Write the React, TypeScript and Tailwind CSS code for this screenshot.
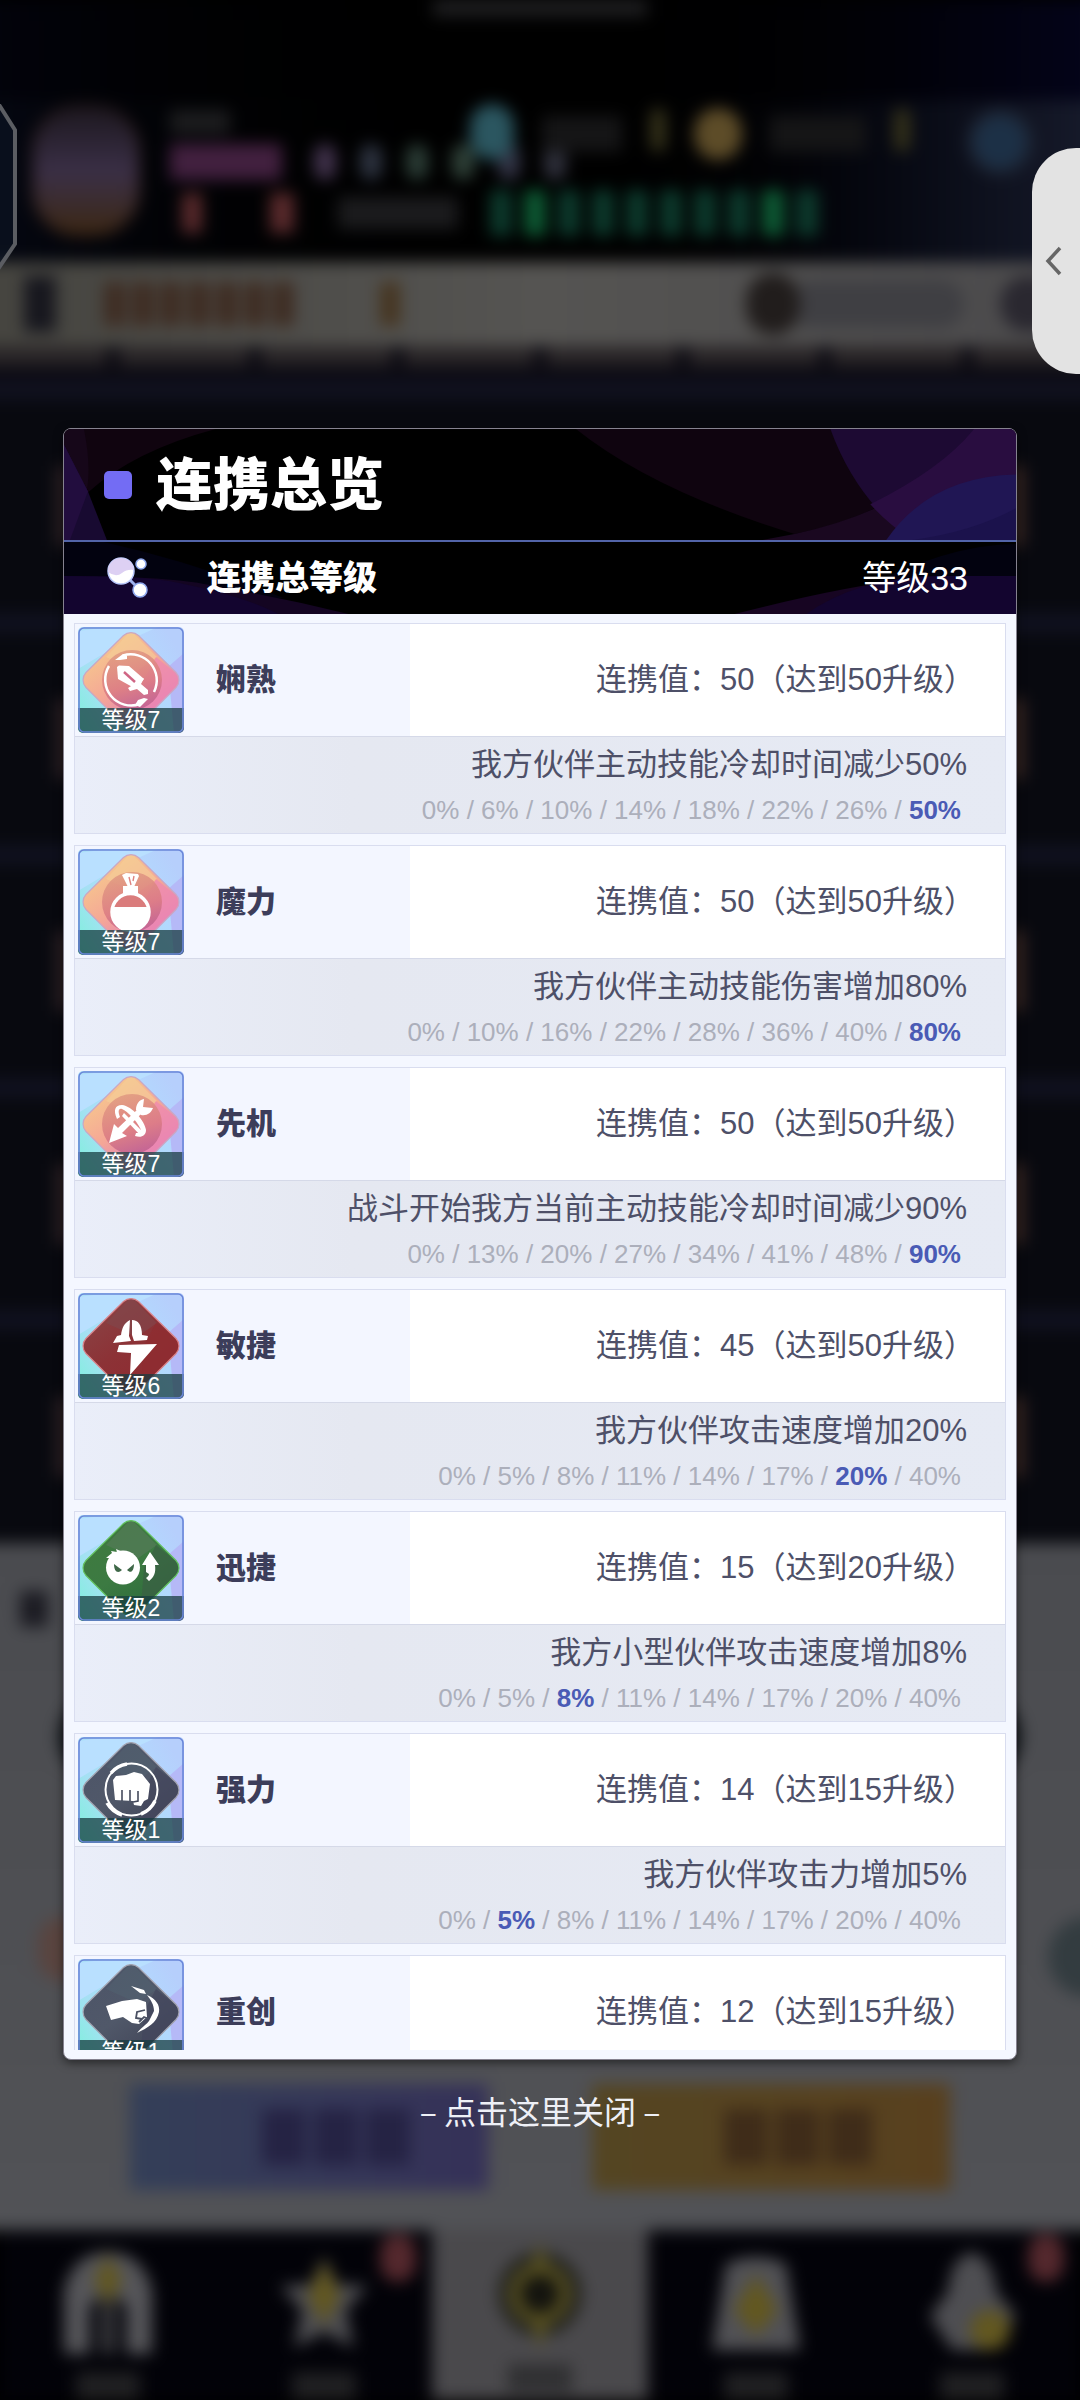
import React from "react";

type Glyph = "sword" | "flask" | "bow" | "bolt" | "slime" | "fist" | "punch";
type Tone = "rainbow" | "red" | "green" | "slate";

interface Bond {
  name: string;
  level: number;
  glyph: Glyph;
  tone: Tone;
  value: number;
  next: number;
  effect?: string;
  steps?: string[];
  active?: number;
}

const COMMON = ["0%", "5%", "8%", "11%", "14%", "17%", "20%", "40%"];

const BONDS: Bond[] = [
  { name: "娴熟", level: 7, glyph: "sword", tone: "rainbow", value: 50, next: 50, effect: "我方伙伴主动技能冷却时间减少50%", steps: ["0%", "6%", "10%", "14%", "18%", "22%", "26%", "50%"], active: 7 },
  { name: "魔力", level: 7, glyph: "flask", tone: "rainbow", value: 50, next: 50, effect: "我方伙伴主动技能伤害增加80%", steps: ["0%", "10%", "16%", "22%", "28%", "36%", "40%", "80%"], active: 7 },
  { name: "先机", level: 7, glyph: "bow", tone: "rainbow", value: 50, next: 50, effect: "战斗开始我方当前主动技能冷却时间减少90%", steps: ["0%", "13%", "20%", "27%", "34%", "41%", "48%", "90%"], active: 7 },
  { name: "敏捷", level: 6, glyph: "bolt", tone: "red", value: 45, next: 50, effect: "我方伙伴攻击速度增加20%", steps: COMMON, active: 6 },
  { name: "迅捷", level: 2, glyph: "slime", tone: "green", value: 15, next: 20, effect: "我方小型伙伴攻击速度增加8%", steps: COMMON, active: 2 },
  { name: "强力", level: 1, glyph: "fist", tone: "slate", value: 14, next: 15, effect: "我方伙伴攻击力增加5%", steps: COMMON, active: 1 },
  { name: "重创", level: 1, glyph: "punch", tone: "slate", value: 12, next: 15 },
];

const TONES: Record<Tone, { from: string; mid: string; to: string; edge: string; facetA: string; facetB: string }> = {
  rainbow: { from: "#f6cd8c", mid: "#f5a796", to: "#d874c6", edge: "#c9a7c4", facetA: "#f5cf98", facetB: "#ee88b0" },
  red: { from: "#8a4345", mid: "#8c3236", to: "#8f2a30", edge: "#d9838a", facetA: "#80474c", facetB: "#8f2c31" },
  green: { from: "#3f7a3f", mid: "#3c7a42", to: "#2c6a3a", edge: "#63c25f", facetA: "#587a5c", facetB: "#3a5f45" },
  slate: { from: "#4d5568", mid: "#505869", to: "#414457", edge: "#a3a3b0", facetA: "#52606f", facetB: "#43465c" },
};

function GlyphArt({ glyph }: { glyph: Glyph }) {
  switch (glyph) {
    case "sword":
      return (
        <g>
          <path d="M45 28.5A26 26 0 0 1 76 65" fill="none" stroke="#fff" strokeWidth="2.500" />
          <path d="M62 77A26 26 0 0 1 31 39" fill="none" stroke="#fff" strokeWidth="2.500" />
          <path d="M37 33 45 27 49 29 49 32 42 33ZM70 72 62 80 57 78 60 73 66 71Z" fill="#fff" />
          <path d="M39 40 41 38.5 51 39 66 52 58 62 40 52Z" fill="#fff" />
          <path d="m46 45 11 10" stroke="#cf6584" strokeWidth="2.400" />
          <path d="m66 51-3 6 7 6v4l-4 1-7-6-7 2-2-3Z" fill="#fff" />
        </g>
      );
    case "flask":
      return (
        <g>
          <path d="m44 26 4-2 12 1 1 2-5 11h-6Z" fill="#fff" />
          <path d="m51 28 2 8M56 27l-1 5" stroke="#de8480" strokeWidth="1.400" />
          <path d="M45 37h15v11H45Z" fill="#fff" />
          <circle cx="52.500" cy="63" r="18.500" fill="#da7c7c" stroke="#fff" strokeWidth="3.500" />
          <path d="M34 58h37a19 19 0 1 1-37 0Z" fill="#fff" />
        </g>
      );
    case "bow":
      return (
        <g fill="#fff">
          <path d="m31 72 5-19 4 4L60 38l4 4-20 20 5 3Z" />
          <path d="M58 39c0-6 3-10 8-11l-1 8 10 1c-2 5-6 8-12 7Z" />
          <path d="M39 48c-4-9-2-14 5-14 10 1 23 16 24 25 0 6-5 8-11 6l1-3c4 0 6-2 4-5C58 49 50 41 44 38c-4-1-4 3-2 8Z" />
          <path d="m46 42 20 20-4 2-18-19Z" />
        </g>
      );
    case "bolt":
      return (
        <g fill="#fff">
          <path d="m35 50 4-7 4-1c1-7 3-12 9-15l-1 16 2 5Z" />
          <path d="M54 27c6 0 10 5 10 15l6 1-1 4-13 1-2-6Z" />
          <path d="m39 59 2-7 38-1-27 31 1-22Z" />
        </g>
      );
    case "slime":
      return (
        <g>
          <path d="m28 43 6-5-1-2 6 1-1-3 9 4 12 5Z" fill="#fff" />
          <circle cx="45" cy="52.500" r="17" fill="#fff" />
          <path d="m36 49 8 6c-4 4-8 2-8-6ZM56 49l-7 6c4 4 7 1 7-6Z" fill="#3f6848" />
          <path d="m72 37 9 13h-4c1 8-1 12-6 16l-3-3c2-1 3-3 3-4l-3-2V50h-4Z" fill="#fff" />
        </g>
      );
    case "fist":
      return (
        <g>
          <circle cx="53.500" cy="52.500" r="26" fill="none" stroke="#fff" strokeWidth="2" />
          <path d="M33 36A26 26 0 0 1 49 27M29 66a26 26 0 0 0 15 12M77 64a26 26 0 0 1-14 13" fill="none" stroke="#fff" strokeWidth="3.500" />
          <path d="m35 43 3-4 10-1 8-3 8 2 8 10-2 15-4 2-3 5-7-1-1-4-18-1Z" fill="#fff" />
          <path d="M44 53v11M52 53v11M60 54v10l-5 1" stroke="#444a5c" strokeWidth="1.600" fill="none" />
        </g>
      );
    default:
      return (
        <g>
          <path d="m28 47 16-5 15-2 9 3 1 15-8 7-7-1-9-6-12 3Z" fill="#fff" />
          <path d="m67 51-8 2-1 6 6 1M61 63l5-5 5 2" stroke="#4a5062" strokeWidth="1.800" fill="none" />
          <path d="m53 27 13 4 2 4-6-1Z" fill="#fff" />
          <path d="M69 36c9 4 13 10 12 17-2 11-12 16-22 21 6-7 10-9 12-12l5-10c0-6-3-11-7-16Z" fill="#fff" />
        </g>
      );
  }
}

function BondIcon({ bond }: { bond: Bond }) {
  const t = TONES[bond.tone];
  const id = bond.glyph;
  return (
    <div className="relative flex size-[106px] shrink-0 flex-col justify-end overflow-hidden rounded-[5px]">
      <svg viewBox="0 0 106 106" className="absolute inset-0 size-full" aria-hidden="true">
        <defs>
          <linearGradient id={`${id}-tile`} x1="0" y1="0.9" x2="1" y2="0.3">
            <stop offset="0" stopColor="#7ff0dc" />
            <stop offset="0.3" stopColor="#a6e0f4" />
            <stop offset="0.7" stopColor="#b2d9fe" />
            <stop offset="1" stopColor="#b6cffc" />
          </linearGradient>
          <linearGradient id={`${id}-gem`} x1="0.2" y1="0.1" x2="0.75" y2="0.9">
            <stop offset="0" stopColor={t.from} />
            <stop offset="0.5" stopColor={t.mid} />
            <stop offset="1" stopColor={t.to} />
          </linearGradient>
          <linearGradient id={`${id}-disc`} x1="0.3" y1="0" x2="0.6" y2="1">
            <stop offset="0" stopColor="#e09a80" />
            <stop offset="0.6" stopColor="#da7a82" />
            <stop offset="1" stopColor="#bd5f90" />
          </linearGradient>
          <clipPath id={`${id}-clip`}>
            <path d="M45.500 8.500a11 11 0 0 1 15 0L98 45.500a11 11 0 0 1 0 15L60.500 98a11 11 0 0 1-15 0L8 60.500a11 11 0 0 1 0-15Z" />
          </clipPath>
        </defs>
        <rect width="106" height="106" fill={`url(#${id}-tile)`} />
        <path d="M106 26 90 40l6 66h10Z" fill="#b5b9f7" />
        <path d="M0 4 32 0h48L40 18 0 42Z" fill="#b9e0ff" />
        <g clipPath={`url(#${id}-clip)`}>
          <rect width="106" height="106" fill={`url(#${id}-gem)`} />
          <path d="M28 30 53 4l26 26-20 14Z" fill={t.facetA} opacity="0.6" />
          <path d="m78 30 28 23-44 50 4-50Z" fill={t.facetB} opacity="0.7" />
        </g>
        <path d="M45.500 8.500a11 11 0 0 1 15 0L98 45.500a11 11 0 0 1 0 15L60.500 98a11 11 0 0 1-15 0L8 60.500a11 11 0 0 1 0-15Z" fill="none" stroke={t.edge} strokeWidth="1.200" />
        {bond.tone === "rainbow" && <circle cx="54" cy="53" r="30" fill={`url(#${id}-disc)`} opacity="0.85" />}
        <GlyphArt glyph={bond.glyph} />
        <rect y="81" width="106" height="25" fill="#173c40" opacity="0.74" />
        <rect x="1" y="1" width="104" height="104" rx="5" fill="none" stroke="#6a86d8" strokeWidth="1.600" />
      </svg>
      <span className="relative text-center text-[23px] leading-[26px] text-white">等级{bond.level}</span>
    </div>
  );
}

function BondCard({ bond }: { bond: Bond }) {
  return (
    <li className="shrink-0 border border-[#d9ddef]">
      <div className="flex h-[112px] bg-white">
        <div className="flex w-[36%] items-center gap-8 bg-[#f3f6ff] pl-[3px]">
          <BondIcon bond={bond} />
          <h3 className="text-[30px] leading-9 font-black text-[#3c3d5a]">{bond.name}</h3>
        </div>
        <p className="flex flex-1 items-center justify-end pr-[30px] text-[31px] whitespace-nowrap text-[#4e5068]">
          连携值：{bond.value}（达到{bond.next}升级）
        </p>
      </div>
      {bond.effect && (
        <div className="flex h-[97px] flex-col items-end border-t border-[#d5d9e8] bg-linear-to-r from-[#eaeef9] via-[#e5e8f1] via-30% to-[#e6eaf4] pt-1.5 pr-[38px] whitespace-nowrap">
          <p className="text-[31px] leading-[44px] text-[#4e5068]">{bond.effect}</p>
          <p className="pr-1.5 text-[26px] leading-[46px] text-[#acafbb]">
            {bond.steps?.map((s, i) => (
              <React.Fragment key={i}>
                {i > 0 && " / "}
                {i === bond.active ? <strong className="font-bold text-[#4a5bb5]">{s}</strong> : s}
              </React.Fragment>
            ))}
          </p>
        </div>
      )}
    </li>
  );
}

function NavShape({ kind }: { kind: number }) {
  return (
    <svg viewBox="0 0 100 110" className="h-[110px] w-[100px]" aria-hidden="true">
      {kind === 0 && <><path d="M6 104V40Q16 2 50 2t44 38v64H68V56L50 40 32 56v48Z" fill="#555559" /><path d="M44 44h12v60H44Z" fill="#444448" /><path d="m50 4 14 26-14 26-14-26Z" fill="#625720" /></>}
      {kind === 1 && <><path d="m50 6 13 28 31 2-22 24 8 38-30-16-30 16 8-38L6 36l31-2Z" fill="#4e4e52" /><path d="m50 10 16 36-16 30-16-30Z" fill="#625720" /></>}
      {kind === 2 && <><circle cx="50" cy="52" r="42" fill="#22221c" /><circle cx="50" cy="52" r="25" fill="#14140f" stroke="#5f5722" strokeWidth="10" /><path d="m50 0 9 30H41Zm0 108 9-34H41Z" fill="#5f5722" /></>}
      {kind === 3 && <><path d="M20 14q30-14 60 0l14 86H6Z" fill="#515155" /><path d="m50 24 22 36-22 26-22-26Z" fill="#625720" /></>}
      {kind === 4 && <><path d="M50 2q22 8 24 40l20 24-22 34H30L8 66l18-24Q28 8 50 2Z" fill="#4e4e52" /><circle cx="68" cy="80" r="20" fill="#625720" /></>}
    </svg>
  );
}

function Backdrop() {
  return (
    <div aria-hidden="true" className="absolute inset-0 overflow-hidden bg-black">
      <div className="-mx-6 flex h-full flex-col px-6 blur-[8px]">
        <div className="-mx-6 h-[100px] bg-linear-to-r from-[#02030c] via-black to-[#04041a]">
          <div className="mx-auto h-4 w-[214px] bg-[#202022]" />
        </div>
        <div className="-mx-6 flex h-[162px] gap-7 bg-linear-to-r from-[#050812] via-black to-[#171b2c] pl-[54px]">
          <div className="mt-1 h-[134px] w-[112px] shrink-0 rounded-[48px] border-4 border-[#1e1210] bg-linear-to-b from-[#1d1820] via-[#3a2f46] to-[#3c2712]" />
          <div className="flex flex-col gap-2.5 pt-2.5">
            <div className="h-6 w-[60px] bg-[#1c1c1e]" />
            <div className="flex items-center gap-8">
              <div className="h-9 w-[112px] bg-[#42203f]" />
              {["#41324c", "#2d3340", "#2b3d36", "#2f4138", "#333446", "#30313d"].map((c) => (
                <div key={c} className="-mr-2 h-9 w-[22px] rounded-full" style={{ background: c }} />
              ))}
            </div>
            <div className="flex items-center pl-3">
              <div className="mr-[68px] h-10 w-5 bg-[#5a2a2c]" />
              <div className="mr-[44px] h-10 w-6 bg-[#5a2a2c]" />
              <div className="mr-8 h-8 w-[120px] bg-[#1b1b1d]" />
              <div className="flex gap-3">
                {[0, 1, 2, 3, 4, 5, 6, 7, 8, 9].map((i) => (
                  <div key={i} className={i === 1 || i === 8 ? "h-[46px] w-[22px] rounded bg-[#0d5a34]" : "h-[46px] w-[22px] rounded bg-[#0c3a2c]"} />
                ))}
              </div>
            </div>
          </div>
          <div className="mt-1 -ml-[376px] h-14 w-11 shrink-0 rounded-full bg-[#2b5660]" />
          <div className="mt-4 h-9 w-20 shrink-0 bg-[#151516]" />
          <div className="mt-2 h-11 w-4 shrink-0 rounded-full bg-[#35321a]" />
          <div className="mt-2 h-13 w-12 shrink-0 rounded-full bg-[#5d4c28]" />
          <div className="mt-4 h-9 w-24 shrink-0 bg-[#151516]" />
          <div className="mt-2 h-11 w-4 shrink-0 rounded-full bg-[#35321a]" />
          <div className="mt-2 ml-7 h-[68px] w-[68px] shrink-0 rounded-full border-8 border-[#1c2230] bg-[#1c3046]" />
        </div>
        <div className="-mx-6 flex h-[84px] items-center bg-linear-to-r from-[#45443f] via-[#555452] to-[#4a494b] px-12">
          <div className="h-14 w-8 bg-[#17171e]" />
          <div className="ml-12 flex gap-1.5">
            {[0, 1, 2, 3, 4, 5, 6].map((i) => (
              <div key={i} className="h-11 w-[22px] bg-[#3e2c22]" />
            ))}
          </div>
          <div className="ml-[86px] h-11 w-5 bg-[#463520]" />
          <div className="ml-auto h-[62px] w-[54px] rounded-full bg-[#211d1c]" />
          <div className="h-12 w-[164px] rounded-r-full bg-[#3f3f43]" />
          <div className="ml-9 h-14 w-14 rounded-full bg-[#2a2830]" />
        </div>
        <div className="-mx-6 flex h-[34px] gap-3 bg-[#0b0a12]">
          {[0, 1, 2, 3, 4, 5, 6, 7].map((i) => (
            <div key={i} className="h-5 flex-1 bg-[#2a2628]" />
          ))}
        </div>
        <div className="-mx-6 flex h-[1163px] flex-col justify-between bg-[#08090f]">
          {[0, 1, 2, 3, 4].map((i) => (
            <div key={i} className="flex flex-1 items-center justify-between border-t-[20px] border-[#10111f] px-20">
              <div className="h-20 w-5 bg-[#2c2024]" />
              <div className="h-20 w-4 bg-[#3a2723]" />
            </div>
          ))}
        </div>
        <div className="-mx-6 flex flex-1 flex-col bg-linear-to-b from-[#4a4b4f] to-[#515256]">
          <div className="mt-12 ml-11 h-9 w-7 bg-[#1b1b22]" />
          <div className="mt-[70px] flex justify-between px-[82px]">
            <div className="size-20 rounded-full bg-[#14181c]" />
            <div className="size-20 rounded-full bg-[#14181c]" />
          </div>
          <div className="mt-[140px] flex justify-between pl-[62px]">
            <div className="h-16 w-12 rounded-full bg-[#59443f]" />
            <div className="h-20 w-14 rounded-l-full bg-[#333c40]" />
          </div>
          <div className="mt-auto mb-10 grid grid-cols-2 gap-[104px] px-[154px]">
            <div className="flex h-[106px] items-center justify-end gap-2 bg-linear-to-r from-[#343f58] to-[#353158] pr-[78px]">
              {[0, 1, 2].map((i) => (
                <div key={i} className="h-14 w-11 bg-[#252344]" />
              ))}
            </div>
            <div className="flex h-[106px] items-center justify-end gap-2 bg-linear-to-r from-[#544522] to-[#58401e] pr-[78px]">
              {[0, 1, 2].map((i) => (
                <div key={i} className="h-14 w-11 bg-[#3f2c19]" />
              ))}
            </div>
          </div>
        </div>
        <div className="grid h-[170px] shrink-0 grid-cols-5 bg-black">
          {[0, 1, 2, 3, 4].map((i) => (
            <div key={i} className={i === 2 ? "relative flex flex-col items-center gap-3 bg-[#4a494c] pt-3" : "relative flex flex-col items-center gap-3 bg-[#020208] pt-5"}>
              <NavShape kind={i} />
              <div className={i === 2 ? "h-7 w-16 bg-[#303032]" : "h-7 w-16 bg-[#202022]"} />
              {(i === 1 || i === 4) && <div className="absolute top-1 right-4 h-12 w-9 rounded-full bg-[#54282d]" />}
            </div>
          ))}
        </div>
      </div>
    </div>
  );
}

export default function App() {
  return (
    <div className="relative flex h-screen min-h-[1200px] flex-col overflow-hidden bg-black px-[63px] pt-[428px] pb-[244px] font-['Liberation_Sans','Noto_Sans_CJK_SC',sans-serif]">
      <Backdrop />

      <svg viewBox="0 0 20 170" className="absolute top-[104px] left-0 h-[170px] w-5" aria-hidden="true">
        <path d="M-4 -4 15 26v114L-4 168" fill="#0d1524" fillOpacity="0.600" stroke="#5b5d62" strokeWidth="4" />
      </svg>
      <button type="button" aria-label="展开侧边栏" className="absolute top-[148px] right-0 flex h-[226px] w-12 items-center rounded-l-[44px] bg-[#e3e3e3] pl-3">
        <svg viewBox="0 0 20 30" className="h-[30px] w-5" aria-hidden="true">
          <path d="M16 2 4 15l12 13" fill="none" stroke="#666" strokeWidth="3.500" />
        </svg>
      </button>

      <section role="dialog" aria-labelledby="dialog-title" className="relative flex min-h-0 flex-1 flex-col overflow-hidden rounded-[8px] border border-[#85828f] bg-[#f4f7ff] pb-[9px] shadow-[0_3px_10px_rgba(0,0,0,0.5)]">
        <header className="relative flex h-[113px] shrink-0 items-center gap-6 border-b-2 border-[#5264a8] bg-black pl-10">
          <svg viewBox="0 0 954 112" preserveAspectRatio="none" className="absolute inset-0 size-full" aria-hidden="true">
            <path d="M0 0h152Q70 22 24 64L0 90Z" fill="#10040f" />
            <path d="M0 0h20Q28 40 22 66L0 100Z" fill="#160719" />
            <path d="m0 16 24 47 19 49H0Z" fill="#180a31" />
            <path d="m0 16 24 47L6 112H0Z" fill="#220d3e" />
            <path d="M513 0Q590 62 732 106 850 84 900 0Z" fill="#0f040f" />
            <path d="M732 106Q860 78 912 0h42v112H700Z" fill="#1a0820" />
            <path d="M768 0q26 72 82 112h104V0Z" fill="#1d0a33" />
            <path d="M808 76Q880 40 912 0h42v112H850Q826 96 808 76Z" fill="#290d40" />
            <path d="M824 112q44-64 130-66v66Z" fill="#201654" />
            <path d="M850 112q60-8 104-32v32Z" fill="#1b124c" />
          </svg>
          <span className="relative size-7 rounded-[5px] bg-[#736cf4]" aria-hidden="true" />
          <h1 id="dialog-title" className="relative text-[57px] leading-[72px] font-black text-white">连携总览</h1>
        </header>

        <div className="relative flex h-[72px] shrink-0 items-center bg-black pr-12 pl-[41px]">
          <svg viewBox="0 0 954 72" preserveAspectRatio="none" className="absolute inset-0 size-full" aria-hidden="true">
            <path d="M0 0h40q90 20 180 56H0Z" fill="#02020f" />
            <path d="M0 34q110 0 150 10 70 12 135 28H0Z" fill="#140522" />
            <path d="M0 34q90 0 120 8 60 12 95 30H0Z" fill="#13052f" />
            <path d="M954 2q-70 0-160 48h160Z" fill="#02020f" />
            <path d="M672 72q110-28 170-34h112v34Z" fill="#170522" />
            <path d="M744 72q50-36 130-38h80v38Z" fill="#13052f" />
          </svg>
          <svg viewBox="0 0 44 48" className="relative h-12 w-11" aria-hidden="true">
            <path d="m16 17 19 19" stroke="#9fb2ee" strokeWidth="3" />
            <circle cx="16" cy="17" r="13" fill="#fff" stroke="#b9c8fa" strokeWidth="1.500" />
            <path d="M3 18a13 13 0 0 1 26-2q-7-1-12 3-6 5-14-1Z" fill="#ddd0f3" />
            <circle cx="36" cy="10" r="5" fill="#fff" stroke="#8fa8ee" strokeWidth="1.500" />
            <circle cx="35" cy="36" r="7" fill="#fff" stroke="#8fa8ee" strokeWidth="1.500" />
          </svg>
          <h2 className="relative ml-[58px] text-[34px] leading-10 font-black text-white">连携总等级</h2>
          <p className="relative ml-auto text-[34px] leading-10 text-white">等级33</p>
        </div>

        <ul className="flex min-h-0 flex-1 flex-col gap-[11px] overflow-hidden px-2.5 pt-[9px]">
          {BONDS.map((b) => (
            <BondCard key={b.name} bond={b} />
          ))}
        </ul>
      </section>

      <button type="button" className="relative mt-6 h-[72px] self-center pb-5 font-['Noto_Sans_CJK_SC',sans-serif] text-[32px] leading-[48px] whitespace-nowrap text-[#eef0f6]">
        – 点击这里关闭 –
      </button>
    </div>
  );
}
